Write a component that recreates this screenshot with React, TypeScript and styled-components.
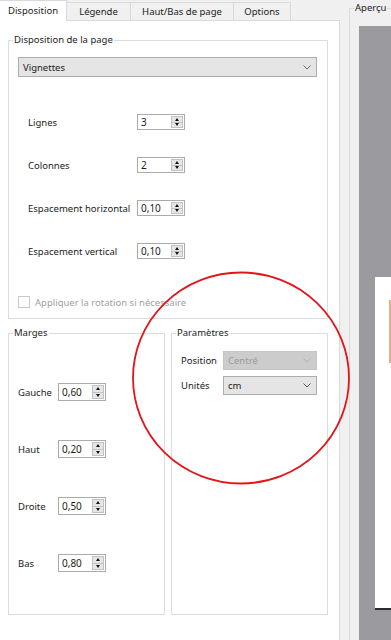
import React from "react";
import styled, { createGlobalStyle } from "styled-components";

const GlobalStyle = createGlobalStyle`
  html, body { margin: 0; padding: 0; background: #f0f0f0; }
  body { font-family: "Noto Sans", "DejaVu Sans", sans-serif; font-size: 9.5px; color: #1b1b1b; }
  #root { width: 391px; height: 640px; }
  * { box-sizing: border-box; }
`;

const Root = styled.div`
  position: relative;
  display: flex;
  width: 391px;
  height: 640px;
  overflow: hidden;
  background: #f0f0f0;
`;

const TabWidget = styled.div`
  flex: none;
  width: 340px;
  display: flex;
  flex-direction: column;
`;

const TabBar = styled.div`
  display: flex;
  align-items: flex-end;
  height: 20px;
  position: relative;
  z-index: 1;
`;

const Tab = styled.div<{ $active?: boolean; $w: number }>`
  width: ${(p) => p.$w}px;
  height: ${(p) => (p.$active ? 21 : 18)}px;
  margin-bottom: ${(p) => (p.$active ? -1 : 0)}px;
  background: ${(p) => (p.$active ? "#ffffff" : "#f0f0f0")};
  border-top: 1px solid #d9d9d9;
  border-right: 1px solid #d9d9d9;
  display: flex;
  align-items: center;
  justify-content: center;
  padding-bottom: ${(p) => (p.$active ? 1 : 0)}px;
  white-space: nowrap;
`;

const Panel = styled.div`
  flex: 1;
  background: #ffffff;
  border-top: 1px solid #d9d9d9;
  border-right: 1px solid #d9d9d9;
  padding: 12px 11px 0 8px;
  display: flex;
  flex-direction: column;
`;

const Group = styled.fieldset<{ $pt: number }>`
  margin: 0;
  min-width: 0;
  border: 1px solid #dcdcdc;
  padding: ${(p) => p.$pt}px 10px 10px 9px;
`;

const Legend = styled.legend`
  margin-left: -5px;
  padding: 0 1px;
  line-height: 14px;
  white-space: nowrap;
`;

const Combo = styled.div<{ $disabled?: boolean; $h: number }>`
  height: ${(p) => p.$h}px;
  display: flex;
  align-items: center;
  justify-content: space-between;
  padding: 0 5px 0 4px;
  background: ${(p) => (p.$disabled ? "#cccccc" : "#e5e5e5")};
  border: 1px solid ${(p) => (p.$disabled ? "#c4c4c4" : "#acacac")};
  color: ${(p) => (p.$disabled ? "#9a9a9a" : "#1b1b1b")};
`;

const Chevron = ({ color }: { color: string }) => (
  <svg width="8" height="5" viewBox="0 0 8 5">
    <path d="M0.5 0.5 L4 4 L7.5 0.5" fill="none" stroke={color} strokeWidth="1" />
  </svg>
);

const FormGrid = styled.div<{ $cols: string; $gap: number; $mt: number; $pl: number }>`
  display: grid;
  grid-template-columns: ${(p) => p.$cols};
  row-gap: ${(p) => p.$gap}px;
  margin-top: ${(p) => p.$mt}px;
  padding-left: ${(p) => p.$pl}px;
  align-items: center;
`;

const Label = styled.span`
  white-space: nowrap;
`;

const Spin = styled.div<{ $h: number }>`
  width: 48px;
  height: ${(p) => p.$h}px;
  display: flex;
  background: #ffffff;
  border: 1px solid #ababab;
`;

const SpinValue = styled.span`
  flex: 1;
  display: flex;
  align-items: center;
  padding-left: 3px;
  font-size: 10px;
`;

const SpinButtons = styled.div`
  width: 13px;
  display: flex;
  flex-direction: column;
  padding: 1px 1px 1px 0;
  gap: 0;
`;

const SpinButton = styled.div<{ $down?: boolean }>`
  flex: 1;
  background: #e6e6e6;
  border: 1px solid #c2c2c2;
  ${(p) => (p.$down ? "border-top: none;" : "")}
  display: flex;
  align-items: center;
  justify-content: center;
  &::after {
    content: "";
    width: 0;
    height: 0;
    border-left: 2.5px solid transparent;
    border-right: 2.5px solid transparent;
    ${(p) => (p.$down ? "border-top: 3px solid #111;" : "border-bottom: 3px solid #111;")}
  }
`;

const SpinBox = ({ value, h }: { value: string; h: number }) => (
  <Spin $h={h}>
    <SpinValue>{value}</SpinValue>
    <SpinButtons>
      <SpinButton />
      <SpinButton $down />
    </SpinButtons>
  </Spin>
);

const CheckRow = styled.div`
  display: flex;
  align-items: center;
  gap: 5px;
  margin-top: 37px;
  color: #a0a0a0;
  height: 12px;
`;

const CheckBox = styled.span`
  width: 12px;
  height: 12px;
  border: 1px solid #cacaca;
  background: #ffffff;
  flex: none;
`;

const BottomRow = styled.div`
  display: flex;
  gap: 6px;
  margin-top: 7px;
  height: 289px;
`;

const HalfGroup = styled(Group)`
  width: 157px;
  flex: none;
`;

const PreviewColumn = styled.div`
  flex: 1;
  overflow: hidden;
  padding: 1px 0 0 9px;
`;

const PreviewGroup = styled.fieldset`
  margin: 0;
  width: 200px;
  height: 700px;
  border: 1px solid #dcdcdc;
  padding: 11px 0 0 9px;
`;

const Canvas = styled.div`
  background: #9a9a9f;
  height: 640px;
  padding: 251px 0 0 16px;
`;

const Page = styled.div`
  width: 100px;
  height: 333px;
  background: #ffffff;
  border-bottom: 2px solid #2b2b2b;
  padding: 23px 0 0 14px;
`;

const Thumb = styled.div`
  width: 3px;
  height: 63px;
  background: #dfb08c;
`;

const Annotation = styled.svg`
  position: absolute;
  left: 131px;
  top: 270px;
  pointer-events: none;
`;

export default function App() {
  return (
    <>
      <GlobalStyle />
      <Root>
        <TabWidget>
          <TabBar>
            <Tab $active $w={67}>Disposition</Tab>
            <Tab $w={64}>Légende</Tab>
            <Tab $w={103}>Haut/Bas de page</Tab>
            <Tab $w={57}>Options</Tab>
          </TabBar>
          <Panel>
            <Group $pt={10}>
              <Legend>Disposition de la page</Legend>
              <Combo $h={20}>
                <span>Vignettes</span>
                <Chevron color="#6a6a6a" />
              </Combo>
              <FormGrid $cols="109px 48px" $gap={27} $mt={37} $pl={10}>
                <Label>Lignes</Label>
                <SpinBox value="3" h={16} />
                <Label>Colonnes</Label>
                <SpinBox value="2" h={16} />
                <Label>Espacement horizontal</Label>
                <SpinBox value="0,10" h={16} />
                <Label>Espacement vertical</Label>
                <SpinBox value="0,10" h={16} />
              </FormGrid>
              <CheckRow>
                <CheckBox />
                <span>Appliquer la rotation si nécessaire</span>
              </CheckRow>
            </Group>
            <BottomRow>
              <HalfGroup $pt={43}>
                <Legend>Marges</Legend>
                <FormGrid $cols="40px 48px" $gap={39} $mt={0} $pl={0}>
                  <Label>Gauche</Label>
                  <SpinBox value="0,60" h={18} />
                  <Label>Haut</Label>
                  <SpinBox value="0,20" h={18} />
                  <Label>Droite</Label>
                  <SpinBox value="0,50" h={18} />
                  <Label>Bas</Label>
                  <SpinBox value="0,80" h={18} />
                </FormGrid>
              </HalfGroup>
              <HalfGroup $pt={11}>
                <Legend>Paramètres</Legend>
                <FormGrid $cols="42px 94px" $gap={6} $mt={0} $pl={0}>
                  <Label>Position</Label>
                  <Combo $h={19} $disabled>
                    <span>Centré</span>
                    <Chevron color="#b0b0b0" />
                  </Combo>
                  <Label>Unités</Label>
                  <Combo $h={19}>
                    <span>cm</span>
                    <Chevron color="#555" />
                  </Combo>
                </FormGrid>
              </HalfGroup>
            </BottomRow>
          </Panel>
        </TabWidget>
        <PreviewColumn>
          <PreviewGroup>
            <Legend>Aperçu</Legend>
            <Canvas>
              <Page>
                <Thumb />
              </Page>
            </Canvas>
          </PreviewGroup>
        </PreviewColumn>
        <Annotation width="222" height="218" viewBox="0 0 222 218">
          <ellipse cx="110" cy="108" rx="108" ry="105.5" fill="none" stroke="#e3151b" strokeWidth="1.8" />
        </Annotation>
      </Root>
    </>
  );
}
